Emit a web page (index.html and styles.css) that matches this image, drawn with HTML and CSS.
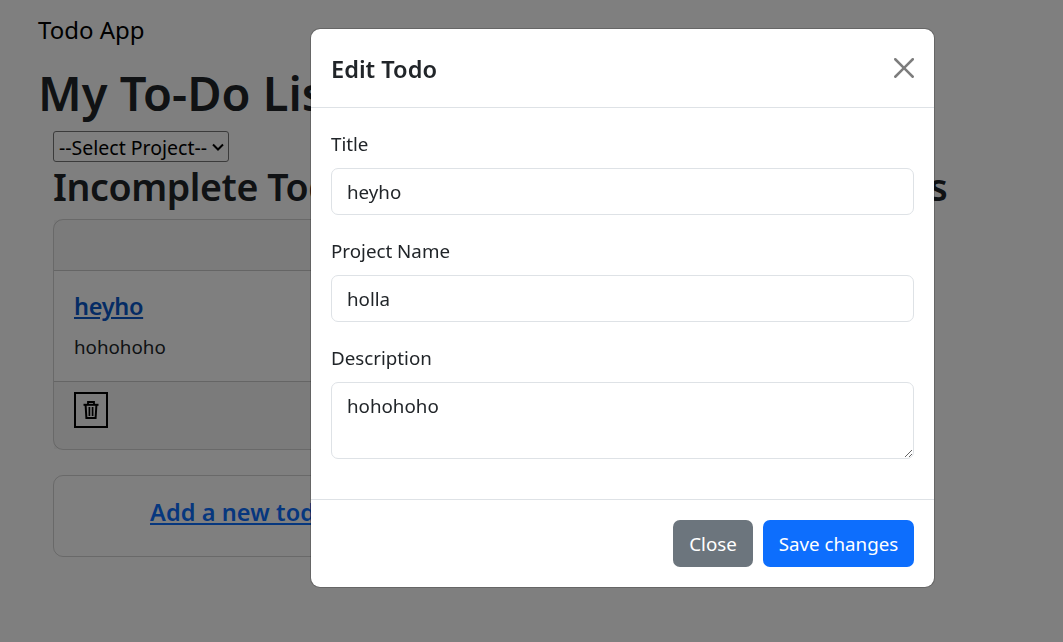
FILE: index.html
```html
<!DOCTYPE html>
<html lang="en">
<head>
<meta charset="utf-8">
<title>Todo App</title>
<link rel="stylesheet" href="styles.css">
</head>
<body>
<div class="page">
  <nav class="navbar">Todo App</nav>
  <h1 class="page-title">My To-Do List</h1>
  <div class="content">
    <select class="project-select"><option>--Select Project--</option></select>
    <div class="columns">
      <section class="column">
        <h2 class="column-title">Incomplete Todos</h2>
        <div class="card">
          <div class="card-header"></div>
          <div class="card-body">
            <a class="todo-link" href="#">heyho</a>
            <p class="todo-text">hohohoho</p>
          </div>
          <div class="card-footer">
            <button class="icon-button" type="button" aria-label="Delete">
              <svg class="trash" viewBox="0 0 16 18" fill="none" stroke="currentColor"><path d="M5 3.2V1h6v2.2" stroke-width="1.8"/><path d="M.5 3.8h15" stroke-width="2"/><path d="M2.6 4l.8 13h9.2l.8-13" stroke-width="2"/><path d="M6.4 6v9M9.6 6v9" stroke-width="1.7"/></svg>
            </button>
          </div>
        </div>
        <div class="card add-card"><a class="add-link" href="#">Add a new todo</a></div>
      </section>
      <section class="column">
        <h2 class="column-title">Completed Todos</h2>
      </section>
    </div>
  </div>
</div>
<div class="backdrop"></div>
<div class="modal">
  <header class="modal-header">
    <h3 class="modal-title">Edit Todo</h3>
    <button class="close-x" type="button" aria-label="Close">
      <svg viewBox="0 0 16 16" fill="currentColor"><path d="M.293.293a1 1 0 0 1 1.414 0L8 6.586 14.293.293a1 1 0 1 1 1.414 1.414L9.414 8l6.293 6.293a1 1 0 0 1-1.414 1.414L8 9.414l-6.293 6.293a1 1 0 0 1-1.414-1.414L6.586 8 .293 1.707a1 1 0 0 1 0-1.414"/></svg>
    </button>
  </header>
  <form class="modal-body">
    <div class="field"><label class="field-label">Title</label><input class="control" value="heyho"></div>
    <div class="field"><label class="field-label">Project Name</label><input class="control" value="holla"></div>
    <div class="field"><label class="field-label">Description</label><textarea class="control textarea">hohohoho</textarea></div>
  </form>
  <footer class="modal-footer">
    <button class="btn btn-grey" type="button">Close</button>
    <button class="btn btn-blue" type="button">Save changes</button>
  </footer>
</div>
</body>
</html>
```
FILE: styles.css
```css
* { box-sizing: border-box; }
html, body { height: 100%; }
body {
  margin: 0;
  overflow: hidden;
  background: #fff;
  color: #212529;
  font-family: "Noto Sans", sans-serif;
  font-size: 18.75px;
  line-height: 30px;
}
.page { padding: 11px 0 0 38px; }
.navbar { font-size: 24px; line-height: 37px; color: #000; }
.page-title { margin: 15px 0 0; font-size: 47px; font-weight: 600; line-height: 60px; white-space: nowrap; }
.content { padding: 8px 0 0 15px; }
.project-select {
  display: block;
  width: 176px;
  height: 31px;
  padding: 1px 0 0 5px;
  border: 1px solid #767676;
  border-radius: 3px;
  appearance: none;
  background: #fff url("data:image/svg+xml,%3Csvg xmlns='http://www.w3.org/2000/svg' viewBox='0 0 12 8'%3E%3Cpath d='M1 1.5l5 5 5-5' fill='none' stroke='%23000' stroke-width='2'/%3E%3C/svg%3E") no-repeat right 4px center / 12px 8px;
  font-family: inherit;
  font-size: 19.5px;
  color: #000;
}
.columns { display: grid; grid-template-columns: 584px auto; }
.column-title { margin: 1px 0 8px; font-size: 37.5px; font-weight: 600; letter-spacing: -.4px; line-height: 48px; white-space: nowrap; }
.card { border: 1px solid rgba(0,0,0,.175); border-radius: 10px; }
.card-header { height: 51px; border-bottom: 1px solid rgba(0,0,0,.175); background: rgba(0,0,0,.03); }
.card-body { height: 110px; padding: 17px 20px 0; }
.todo-link { font-size: 23.5px; font-weight: 600; letter-spacing: -.3px; line-height: 37px; color: #0a58ca; }
.todo-text { margin: 7px 0 0; }
.card-footer { height: 68px; padding: 10px 20px; border-top: 1px solid rgba(0,0,0,.175); background: rgba(0,0,0,.03); }
.icon-button {
  display: flex;
  align-items: center;
  justify-content: center;
  width: 34px;
  height: 36px;
  padding: 0;
  background: transparent;
  border: 2px solid #000;
  color: #000;
}
.trash { width: 16px; height: 18px; }
.add-card { margin-top: 25px; height: 82px; padding: 18px 0 0 96px; }
.add-link { font-size: 23.5px; font-weight: 600; letter-spacing: .1px; line-height: 37px; color: #0d6efd; }
.backdrop { position: fixed; inset: 0; background: rgba(0,0,0,.5); }
.modal {
  position: fixed;
  top: 28px;
  left: 310px;
  width: 625px;
  background: #fff;
  border: 1px solid rgba(0,0,0,.2);
  border-radius: 10px;
  background-clip: padding-box;
}
.modal-header {
  display: flex;
  align-items: center;
  justify-content: space-between;
  height: 79px;
  padding: 0 20px;
  border-bottom: 1px solid #dee2e6;
}
.modal-title { margin: 0; padding-top: 2px; font-size: 23.6px; font-weight: 600; line-height: 37px; }
.close-x { display: flex; padding: 0; background: none; border: 0; color: #7d7d7d; }
.close-x svg { width: 20px; height: 20px; }
.modal-body { padding: 20px 20px 20px; }
.field { margin-bottom: 20px; }
.field-label { display: block; padding-top: 1px; margin-bottom: 9px; color: #212529; }
.control {
  display: block;
  width: 100%;
  height: 47px;
  padding: 7px 15px;
  border: 1px solid #dee2e6;
  border-radius: 7px;
  font: inherit;
  color: #212529;
  background: #fff;
}
.textarea { height: 77px; padding-top: 8px; }
.modal-footer {
  display: flex;
  justify-content: flex-end;
  gap: 10px;
  padding: 20px;
  border-top: 1px solid #dee2e6;
}
.btn {
  height: 47px;
  padding: 0;
  border: 0;
  border-radius: 7px;
  font: inherit;
  color: #fff;
}
.btn-grey { width: 80px; background: #6c757d; }
.btn-blue { width: 151px; background: #0d6efd; }
```
